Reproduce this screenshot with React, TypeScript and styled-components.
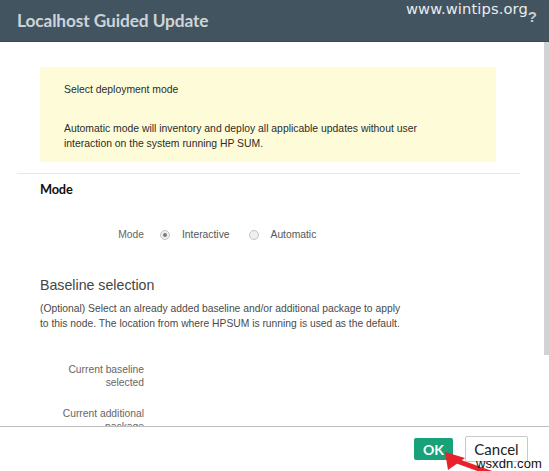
import { createGlobalStyle } from "styled-components";
import styled from "styled-components";

const GlobalStyle = createGlobalStyle`
    html, body {
        margin: 0;
        padding: 0;
        overflow: hidden;
        background: #FFFFFF;
    }
`;

const Dialog = styled.div`
    position: relative;
    display: flex;
    flex-direction: column;
    width: 549px;
    height: 471px;
    background: #FFFFFF;
    font-family: "Liberation Sans", Arial, sans-serif;
`;

const Header = styled.div`
    display: flex;
    align-items: center;
    justify-content: space-between;
    height: 41px;
    flex-shrink: 0;
    padding: 0 12px 0 17px;
    background: #435461;
    border-bottom: 1px solid #3a4955;
`;

const Title = styled.h1`
    margin: 0;
    font-family: Lato, "Open Sans", sans-serif;
    font-weight: 700;
    font-size: 17.3px;
    color: #cdd4d9;
    letter-spacing: -0.1px;
`;

const Help = styled.span`
    align-self: flex-start;
    margin-top: 8px;
    font-family: "Liberation Sans", Arial, sans-serif;
    font-weight: 700;
    font-size: 15px;
    color: #c9ced2;
`;

const Watermark = styled.span<{ $dark?: boolean }>`
    position: absolute;
    font-family: ${p => (p.$dark ? '"Liberation Sans", Arial' : '"DejaVu Sans"')}, sans-serif;
    font-size: ${p => (p.$dark ? "13px" : "14.7px")};
    color: ${p => (p.$dark ? "#111111" : "#e9ecee")};
    letter-spacing: 0.1px;
`;

const Body = styled.div`
    display: flex;
    flex: 1;
    min-height: 0;
`;

const Content = styled.div`
    flex: 1;
    overflow: hidden;
`;

const ScrollTrack = styled.div`
    width: 5px;
    flex-shrink: 0;
`;

const ScrollThumb = styled.div`
    height: 313px;
    background: #d2d2d2;
`;

const Notice = styled.div`
    width: 408px;
    margin: 25px 0 0 40px;
    padding: 15px 24px 11px;
    background: #fefcd8;
    font-size: 10.4px;
    line-height: 15px;
    color: #2b2b2b;
    p {
        margin: 0;
    }
    p + p {
        margin-top: 24px;
    }
`;

const Divider = styled.div`
    height: 1px;
    margin: 11px 24px 0 17px;
    background: #e8e8e8;
`;

const Section = styled.div`
    padding: 0 40px;
`;

const SectionTitle = styled.h2`
    margin: 7px 0 0;
    font-family: Lato, "Open Sans", sans-serif;
    font-weight: 700;
    font-size: 12.8px;
    line-height: 16px;
    letter-spacing: -0.2px;
    color: #111111;
`;

const SubTitle = styled.h3`
    margin: 36px 0 0;
    font-family: "Liberation Sans", Arial, sans-serif;
    font-weight: 400;
    font-size: 14.2px;
    line-height: 17px;
    color: #454545;
`;

const Paragraph = styled.p`
    margin: 7px 0 0;
    font-size: 10.3px;
    line-height: 15px;
    color: #4a4a4a;
`;

const Field = styled.div<{ $gap: number }>`
    display: flex;
    align-items: flex-start;
    margin-top: ${p => p.$gap}px;
    padding-left: 40px;
`;

const Label = styled.div`
    width: 104px;
    flex-shrink: 0;
    text-align: right;
    font-size: 10.3px;
    line-height: 13px;
    color: #666666;
`;

const Radios = styled.div`
    display: flex;
    align-items: center;
    height: 13px;
    margin-left: 16px;
`;

const Radio = styled.span<{ $checked?: boolean }>`
    display: inline-flex;
    align-items: center;
    justify-content: center;
    box-sizing: border-box;
    width: 10px;
    height: 10px;
    border-radius: 50%;
    border: 1px solid #c4c4c4;
    background: #efefef;
    &::after {
        content: "";
        display: ${p => (p.$checked ? "block" : "none")};
        width: 4px;
        height: 4px;
        border-radius: 50%;
        background: #7a7a7a;
    }
`;

const RadioText = styled.span`
    margin: 0 19px 0 12px;
    font-size: 10.3px;
    line-height: 13px;
    color: #555555;
`;

const Footer = styled.div`
    display: flex;
    align-items: center;
    justify-content: flex-end;
    gap: 12px;
    height: 44px;
    flex-shrink: 0;
    padding-right: 21px;
    border-top: 1px solid #bcbcbc;
`;

const Button = styled.button<{ $primary?: boolean }>`
    box-sizing: border-box;
    height: ${p => (p.$primary ? "22px" : "26px")};
    width: ${p => (p.$primary ? "39px" : "63px")};
    padding: 0;
    border-radius: 2px;
    border: ${p => (p.$primary ? "none" : "1px solid #c8c8c8")};
    background: ${p => (p.$primary ? "#17a27a" : "#FFFFFF")};
    color: ${p => (p.$primary ? "#FFFFFF" : "#222222")};
    font-family: Lato, "Open Sans", sans-serif;
    font-weight: ${p => (p.$primary ? 700 : 400)};
    font-size: ${p => (p.$primary ? "14px" : "15px")};
    cursor: pointer;
`;

const Arrow = styled.svg`
    position: absolute;
    left: 440px;
    top: 447px;
`;

function App() {
    return (
        <Dialog>
            <GlobalStyle />
            <Header>
                <Title>Localhost Guided Update</Title>
                <Help>?</Help>
            </Header>
            <Watermark style={{ left: 406, top: 0 }}>www.wintips.org</Watermark>
            <Body>
                <Content>
                    <Notice>
                        <p>Select deployment mode</p>
                        <p>
                            Automatic mode will inventory and deploy all applicable updates without user
                            <br />
                            interaction on the system running HP SUM.
                        </p>
                    </Notice>
                    <Divider />
                    <Section>
                        <SectionTitle>Mode</SectionTitle>
                    </Section>
                    <Field $gap={31}>
                        <Label>Mode</Label>
                        <Radios>
                            <Radio $checked />
                            <RadioText>Interactive</RadioText>
                            <Radio />
                            <RadioText>Automatic</RadioText>
                        </Radios>
                    </Field>
                    <Section>
                        <SubTitle>Baseline selection</SubTitle>
                        <Paragraph>
                            (Optional) Select an already added baseline and/or additional package to apply
                            <br />
                            to this node. The location from where HPSUM is running is used as the default.
                        </Paragraph>
                    </Section>
                    <Field $gap={32}>
                        <Label>Current baseline selected</Label>
                    </Field>
                    <Field $gap={18}>
                        <Label>Current additional package</Label>
                    </Field>
                </Content>
                <ScrollTrack>
                    <ScrollThumb />
                </ScrollTrack>
            </Body>
            <Footer>
                <Button $primary>OK</Button>
                <Button>Cancel</Button>
            </Footer>
            <Arrow width="60" height="24" viewBox="0 0 60 24">
                <path d="M14 13 L56 28" stroke="#e8222a" strokeWidth="5" />
                <path d="M5 5 L8 23 L25 11 Z" fill="#e8222a" />
            </Arrow>
            <Watermark $dark style={{ left: 476, top: 456 }}>wsxdn.com</Watermark>
        </Dialog>
    );
}

export default App;
